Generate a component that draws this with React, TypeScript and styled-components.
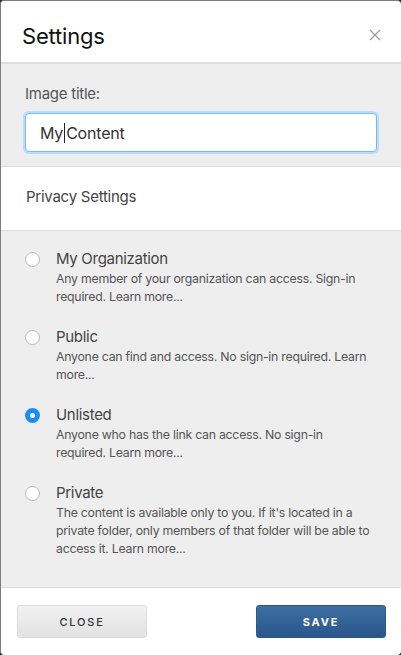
import React from "react";
import styled, { createGlobalStyle } from "styled-components";

const Global = createGlobalStyle`
  html, body { margin: 0; padding: 0; background: #1e1a16; }
  body { font-family: Inter, "Open Sans", "Liberation Sans", sans-serif; }
  #root { width: 401px; height: 655px; }
  * { box-sizing: border-box; }
`;

const Dialog = styled.div`
  width: 401px;
  height: 655px;
  background: #fff;
  border-top: 1px solid #7d7d7d;
  border-left: 1px solid #7d7d7d;
  border-radius: 4px;
  overflow: hidden;
  display: flex;
  flex-direction: column;
`;

const Header = styled.div`
  height: 63px;
  display: flex;
  align-items: center;
  justify-content: space-between;
  padding: 9px 18px 0 21px;
  border-bottom: 2px solid #dedede;
`;

const Title = styled.h1`
  margin: 0;
  font-size: 22px;
  font-weight: 400;
  color: #111;
  letter-spacing: -0.2px;
`;

const CloseX = styled.button`
  border: 0;
  background: none;
  padding: 0;
  width: 14px;
  height: 14px;
  display: flex;
  cursor: pointer;
`;

const GraySection = styled.div<{ $pad: string }>`
  background: #eeeeee;
  padding: ${(p) => p.$pad};
  border-bottom: 1px solid #dcdcdc;
`;

const Label = styled.div`
  font-size: 15px;
  letter-spacing: -0.25px;
  color: #555;
  margin-bottom: 10px;
`;

const Input = styled.div`
  height: 39px;
  border: 1px solid #7cbcf2;
  border-radius: 4px;
  box-shadow: 0 0 0 2px #b9dcfa;
  background: #fff;
  display: flex;
  align-items: center;
  padding-left: 14px;
  font-size: 16px;
  letter-spacing: -0.2px;
  color: #333;
`;

const Caret = styled.span`
  display: inline-block;
  width: 1px;
  height: 20px;
  background: #222;
  margin: 0 1px;
`;

const SubHeader = styled.div`
  height: 64px;
  display: flex;
  align-items: center;
  padding: 0 0 5px 25px;
  font-size: 15px;
  letter-spacing: -0.25px;
  color: #444;
  border-bottom: 1px solid #dcdcdc;
`;

const Options = styled.div`
  flex: 1;
  background: #eeeeee;
  padding: 18px 29px 0 24px;
  display: flex;
  flex-direction: column;
  gap: 21px;
  border-bottom: 1px solid #dcdcdc;
`;

const Option = styled.div`
  display: grid;
  grid-template-columns: 31px 1fr;
`;

const Radio = styled.span<{ $checked: boolean }>`
  width: 15px;
  height: 15px;
  border-radius: 50%;
  margin-top: 3px;
  background: ${(p) => (p.$checked ? "#1a8cff" : "#fff")};
  border: ${(p) => (p.$checked ? "none" : "1px solid #b8b8b8")};
  display: flex;
  align-items: center;
  justify-content: center;
  &::after {
    content: "";
    display: ${(p) => (p.$checked ? "block" : "none")};
    width: 5px;
    height: 5px;
    border-radius: 50%;
    background: #fff;
  }
`;

const OptTitle = styled.div`
  font-size: 15px;
  letter-spacing: -0.3px;
  color: #444;
  line-height: 20px;
  margin-bottom: 1px;
`;

const OptDesc = styled.div`
  font-size: 12.3px;
  letter-spacing: -0.25px;
  color: #555;
  line-height: 18px;
`;

const Footer = styled.div`
  height: 67px;
  display: flex;
  align-items: center;
  justify-content: space-between;
  padding: 0 15px 0 16px;
`;

const Button = styled.button<{ $primary?: boolean }>`
  width: 130px;
  height: 33px;
  border-radius: 3px;
  font-family: inherit;
  font-size: 11px;
  letter-spacing: 1.8px;
  font-weight: ${(p) => (p.$primary ? 700 : 500)};
  color: ${(p) => (p.$primary ? "#fff" : "#333")};
  border: 1px solid ${(p) => (p.$primary ? "#2b5a8c" : "#dcdcdc")};
  background: ${(p) =>
    p.$primary
      ? "linear-gradient(#3e6ea3, #2a578b)"
      : "linear-gradient(#f2f2f2, #e2e2e2)"};
  cursor: pointer;
`;

const options = [
  {
    title: "My Organization",
    desc: "Any member of your organization can access. Sign-in required. Learn more...",
    checked: false,
  },
  {
    title: "Public",
    desc: "Anyone can find and access. No sign-in required. Learn more...",
    checked: false,
  },
  {
    title: "Unlisted",
    desc: "Anyone who has the link can access. No sign-in required. Learn more...",
    checked: true,
  },
  {
    title: "Private",
    desc: "The content is available only to you. If it's located in a private folder, only members of that folder will be able to access it. Learn more...",
    checked: false,
  },
];

export default function App() {
  return (
    <>
      <Global />
      <Dialog>
        <Header>
          <Title>Settings</Title>
          <CloseX aria-label="Close">
            <svg width="12" height="12" viewBox="0 0 12 12">
              <path d="M1 1L11 11M11 1L1 11" stroke="#9a9a9a" strokeWidth="1.2" />
            </svg>
          </CloseX>
        </Header>
        <GraySection $pad="20px 24px 14px 24px">
          <Label>Image title:</Label>
          <Input>
            My<Caret />Content
          </Input>
        </GraySection>
        <SubHeader>Privacy Settings</SubHeader>
        <Options>
          {options.map((o) => (
            <Option key={o.title}>
              <Radio $checked={o.checked} />
              <div>
                <OptTitle>{o.title}</OptTitle>
                <OptDesc>{o.desc}</OptDesc>
              </div>
            </Option>
          ))}
        </Options>
        <Footer>
          <Button>CLOSE</Button>
          <Button $primary>SAVE</Button>
        </Footer>
      </Dialog>
    </>
  );
}
